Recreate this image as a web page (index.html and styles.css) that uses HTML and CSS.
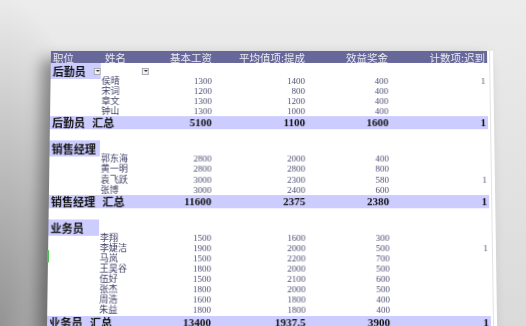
FILE: index.html
```html
<!DOCTYPE html>
<html lang="zh-CN">
<head>
<meta charset="utf-8">
<title>数据透视表</title>
<link rel="stylesheet" href="styles.css">
</head>
<body>
<div class="stage">
  <div class="sheet">
    <span class="sel-mark"></span>
    <div class="table">
      <div class="row hdr">
        <span class="c-pos">职位</span>
        <span class="c-name">姓名</span>
        <span class="num">基本工资</span>
        <span class="num">平均值项:提成</span>
        <span class="num">效益奖金</span>
        <span class="num">计数项:迟到</span>
        <span></span>
      </div>
      <div class="row group">
        <span class="lab first"><b>后勤员</b><i class="dd"></i></span>
        <span class="c-dd"><i class="dd"></i></span>
      </div>
      <div class="row data"><span></span><span class="nm">侯晴</span><span class="num">1300</span><span class="num">1400</span><span class="num">400</span><span class="num">1</span><span></span></div>
      <div class="row data"><span></span><span class="nm">宋词</span><span class="num">1200</span><span class="num">800</span><span class="num">400</span><span class="num"></span><span></span></div>
      <div class="row data"><span></span><span class="nm">章文</span><span class="num">1300</span><span class="num">1200</span><span class="num">400</span><span class="num"></span><span></span></div>
      <div class="row data"><span></span><span class="nm">钟山</span><span class="num">1300</span><span class="num">1000</span><span class="num">400</span><span class="num"></span><span></span></div>
      <div class="row total"><span class="tl">后勤员 汇总</span><span class="num">5100</span><span class="num">1100</span><span class="num">1600</span><span class="num">1</span><span></span></div>
      <div class="row blank"></div>
      <div class="row label"><span class="lab"><b>销售经理</b></span></div>
      <div class="row data"><span></span><span class="nm">郭东海</span><span class="num">2800</span><span class="num">2000</span><span class="num">400</span><span class="num"></span><span></span></div>
      <div class="row data"><span></span><span class="nm">黄一明</span><span class="num">2800</span><span class="num">2800</span><span class="num">800</span><span class="num"></span><span></span></div>
      <div class="row data"><span></span><span class="nm">袁飞跃</span><span class="num">3000</span><span class="num">2300</span><span class="num">580</span><span class="num">1</span><span></span></div>
      <div class="row data"><span></span><span class="nm">张博</span><span class="num">3000</span><span class="num">2400</span><span class="num">600</span><span class="num"></span><span></span></div>
      <div class="row total"><span class="tl">销售经理 汇总</span><span class="num">11600</span><span class="num">2375</span><span class="num">2380</span><span class="num">1</span><span></span></div>
      <div class="row blank"></div>
      <div class="row label"><span class="lab"><b>业务员</b></span></div>
      <div class="row data"><span></span><span class="nm">李翔</span><span class="num">1500</span><span class="num">1600</span><span class="num">300</span><span class="num"></span><span></span></div>
      <div class="row data"><span></span><span class="nm">李婕洁</span><span class="num">1900</span><span class="num">2000</span><span class="num">500</span><span class="num">1</span><span></span></div>
      <div class="row data"><span></span><span class="nm">马岚</span><span class="num">1500</span><span class="num">2200</span><span class="num">700</span><span class="num"></span><span></span></div>
      <div class="row data"><span></span><span class="nm">王昊谷</span><span class="num">1800</span><span class="num">2000</span><span class="num">500</span><span class="num"></span><span></span></div>
      <div class="row data"><span></span><span class="nm">伍好</span><span class="num">1500</span><span class="num">2100</span><span class="num">600</span><span class="num"></span><span></span></div>
      <div class="row data"><span></span><span class="nm">张杰</span><span class="num">1800</span><span class="num">2000</span><span class="num">500</span><span class="num"></span><span></span></div>
      <div class="row data"><span></span><span class="nm">周浩</span><span class="num">1600</span><span class="num">1800</span><span class="num">400</span><span class="num"></span><span></span></div>
      <div class="row data"><span></span><span class="nm">朱益</span><span class="num">1800</span><span class="num">1800</span><span class="num">400</span><span class="num"></span><span></span></div>
      <div class="row total"><span class="tl">业务员 汇总</span><span class="num">13400</span><span class="num">1937.5</span><span class="num">3900</span><span class="num">1</span><span></span></div>
    </div>
    <div class="strip"></div>
  </div>
</div>
</body>
</html>
```
FILE: styles.css
```css
html, body {
  margin: 0;
  height: 326px;
  overflow: hidden;
}
body {
  font-family: "Noto Sans CJK SC", "Noto Sans", sans-serif;
  background:
    radial-gradient(ellipse 110px 330px at 0 100%, rgba(50,50,50,.42), rgba(50,50,50,0)),
    linear-gradient(to bottom, #ececec 0%, #dadada 100%);
}
.stage {
  padding: 51px 0 0 51px;
}
.sheet {
  position: relative;
  display: flex;
  width: 442px;
  transform-origin: 218px 0;
  transform: perspective(1000px) rotateX(3.8deg);
  box-shadow: -9px 8px 14px rgba(0,0,0,.4);
}
.sel-mark {
  position: absolute;
  left: -1px;
  top: 197px;
  width: 2px;
  height: 12px;
  background: #4cc34c;
}
.table {
  width: 436px;
  background: #fff;
}
.strip {
  width: 6px;
  background: linear-gradient(to right, #fff 0 2px, #e3e3e3 2px 3px, #fff 3px);
}
.row {
  display: grid;
  grid-template-columns: 50px 63px 48px 93px 83px 97px 2px;
  align-items: center;
}
.num {
  text-align: right;
  white-space: nowrap;
}
.hdr {
  height: 12px;
  line-height: 11px;
  background: #67679a;
  color: #ececf4;
  font-size: 10.5px;
}
.hdr .c-pos { padding-left: 2px; }
.hdr .c-name { padding-left: 4px; }
.group, .label {
  height: 13px;
}
.lab {
  height: 100%;
  display: flex;
  align-items: center;
  justify-content: space-between;
  background: #ccccff;
  padding-left: 2px;
  font-size: 11px;
  color: #111;
}
.lab b { font-weight: 700; }
.c-dd {
  display: flex;
  align-items: center;
  padding-left: 41px;
}
.dd {
  width: 5px;
  height: 5px;
  border: 1px solid #a9a9b4;
  background: #f3f3f3;
  display: flex;
  align-items: center;
  justify-content: center;
}
.dd::after {
  content: "";
  border-left: 2px solid transparent;
  border-right: 2px solid transparent;
  border-top: 2px solid #333;
}
.data {
  height: 10.1px;
  line-height: 10.1px;
  color: #515176;
}
.data .nm {
  padding-left: 1px;
  font-size: 9px;
  color: #3e3e66;
}
.data .num {
  font-family: "Liberation Serif", serif;
  font-size: 9px;
}
.total {
  height: 13px;
  line-height: 13px;
  background: #ccccff;
  color: #111;
  font-weight: 700;
}
.total .tl {
  grid-column: span 2;
  padding-left: 2px;
  font-size: 11px;
  word-spacing: 4.5px;
}
.total .num {
  font-family: "Liberation Serif", serif;
  font-size: 11px;
}
.blank {
  height: 11px;
}
```
